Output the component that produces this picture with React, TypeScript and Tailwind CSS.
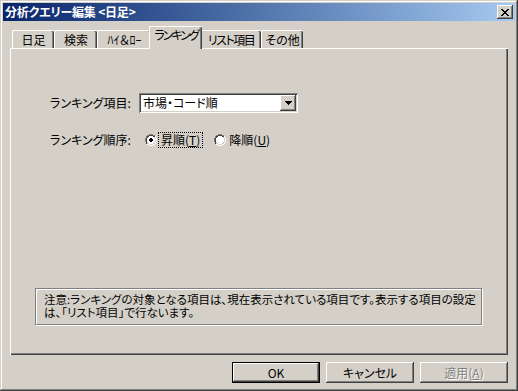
import type React from "react"

const raised =
  "shadow-[inset_-1px_-1px_#404040,inset_1px_1px_#ffffff,inset_-2px_-2px_#808080,inset_2px_2px_#d4d0c8]"
const sunken =
  "shadow-[inset_1px_1px_#808080,inset_-1px_-1px_#ffffff,inset_2px_2px_#404040,inset_-2px_-2px_#d4d0c8]"

const tabs = [
  { label: "日足", w: "w-[42px]", tr: "" },
  { label: "検索", w: "w-[43px]", tr: "" },
  { label: "ﾊｲ＆ﾛｰ", w: "w-[54px]", tr: "" },
  { label: "ランキング", w: "w-[48px]", tr: "tracking-[-2px]", active: true },
  { label: "リスト項目", w: "w-[61px]", tr: "tracking-[-1.5px]" },
  { label: "その他", w: "w-[42px]", tr: "" },
]

const Radio: React.FC<{ checked?: boolean }> = ({ checked }) => (
  <svg width="12" height="12" viewBox="0 0 12 12" className="shrink-0" shapeRendering="crispEdges">
    {/* outer ring */}
    <path d="M4 0h4v1H4zM2 1h2v1H2zM8 1h2v1H8zM1 2h1v2H1zM0 4h1v4H0z" fill="#808080" />
    <path d="M10 2h1v2h-1zM11 4h1v4h-1zM10 8h1v2h-1zM8 10h2v1H8zM4 11h4v1H4zM2 10h2v1H2z" fill="#ffffff" />
    {/* inner ring */}
    <path d="M4 1h4v1H4zM2 2h2v1H2zM8 2h2v1H8zM1 4h1v4H1zM2 3h1v1H2zM1 8h1v2H1z" fill="#404040" />
    <path d="M9 3h1v1H9zM10 4h1v4h-1zM9 8h1v1H9zM8 9h1v1H8zM4 10h4v1H4zM2 9h2v1H2z" fill="#d4d0c8" />
    {/* face */}
    <path d="M4 2h4v1h1v1h1v4H9v1H8v1H4V9H3V8H2V4h1V3h1z" fill="#ffffff" />
    {checked && <path d="M5 4h2v1h1v2H7v1H5V7H4V5h1z" fill="#000000" />}
  </svg>
)

export default function App() {
  return (
    <div
      className={`w-[518px] h-[391px] bg-[#d4d0c8] p-[3px] flex flex-col font-['Noto_Sans_CJK_JP',sans-serif] [font-feature-settings:"palt"] text-[12px] text-black shadow-[inset_-1px_-1px_#404040,inset_1px_1px_#d4d0c8,inset_-2px_-2px_#808080,inset_2px_2px_#ffffff]`}
    >
      {/* Title bar */}
      <div className="h-[18px] flex items-center justify-between pl-[2px] pr-[2px] bg-gradient-to-r from-[#0a246a] to-[#a6caf0]">
        <span className="text-white font-bold leading-none text-[12px] tracking-[-0.2px] whitespace-pre">分析クエリー編集 &lt;日足&gt;</span>
        <div className={`w-[16px] h-[14px] bg-[#d4d0c8] flex items-center justify-center ${raised}`}>
          <svg width="8" height="7" viewBox="0 0 8 7" shapeRendering="crispEdges">
            <path
              d="M0 0h2v1h1v1h2V1h1V0h2v1H7v1H6v1H5v1h1v1h1v1h1v1H6V6H5V5H3v1H2v1H0V6h1V5h1V4h1V3H2V2H1V1H0z"
              fill="#000"
            />
          </svg>
        </div>
      </div>

      {/* Tab control */}
      <div className="px-[7px] pt-[7px] flex flex-col">
        <div className="h-[20px] flex items-end pl-[2px] relative z-10">
          {tabs.map((t) =>
            t.active ? (
              <div
                key={t.label}
                className={`${t.w} h-[21px] -mx-[2px] mb-[-1px] box-content px-[2px] bg-[#d4d0c8] border-t border-l border-white rounded-tl-[2px] rounded-tr-[2px] shadow-[inset_-1px_0_#404040,inset_-2px_0_#808080] flex items-start justify-center pt-[1px] leading-[14px] whitespace-nowrap relative z-10`}
              >
                <span className={t.tr}>{t.label}</span>
              </div>
            ) : (
              <div
                key={t.label}
                className={`${t.w} h-[18px] bg-[#d4d0c8] border-t border-l border-white rounded-tl-[2px] rounded-tr-[2px] shadow-[inset_-1px_0_#404040,inset_-2px_0_#808080] flex items-center justify-center leading-[14px] whitespace-nowrap`}
              >
                <span className={t.tr}>{t.label}</span>
              </div>
            )
          )}
        </div>

        <div className="h-[307px] border-t border-l border-white shadow-[inset_-1px_-1px_#404040,inset_-2px_-2px_#808080] flex flex-col">
          {/* Form */}
          <div className="pl-[39px] pt-[44px] flex flex-col gap-[19px]">
            <div className="flex items-center h-[20px]">
              <span className="w-[89px] shrink-0">ランキング項目:</span>
              <div className={`w-[159px] h-[20px] bg-white flex items-center pl-[4px] pr-[2px] ${sunken}`}>
                <span className="flex-1 leading-none">市場・コード順</span>
                <div className={`w-[16px] h-[16px] bg-[#d4d0c8] flex items-center justify-center ${raised}`}>
                  <svg width="7" height="4" viewBox="0 0 7 4" shapeRendering="crispEdges">
                    <path d="M0 0h7v1H6v1H5v1H4v1H3V3H2V2H1V1H0z" fill="#000" />
                  </svg>
                </div>
              </div>
            </div>

            <div className="flex items-center h-[16px]">
              <span className="w-[89px] shrink-0">ランキング順序:</span>
              <div className="flex items-center pl-[6px]">
                <Radio checked />
                <span className="ml-[1px] px-[2px] h-[16px] flex items-center border border-dotted border-black leading-none">
                  昇順(<span className="underline">T</span>)
                </span>
                <span className="ml-[11px]">
                  <Radio />
                </span>
                <span className="ml-[3px] leading-none">
                  降順(<span className="underline">U</span>)
                </span>
              </div>
            </div>
          </div>

          {/* Note */}
          <div className="mt-auto mb-[30px] ml-[24px] w-[447px] h-[37px] border border-[#808080] shadow-[inset_1px_1px_#ffffff,1px_1px_#ffffff] pl-[8px] pt-[4px] text-[11.5px] leading-[13px] whitespace-nowrap">
            <div>注意:ランキングの対象となる項目は、現在表示されている項目です。表示する項目の設定</div>
            <div>は、「リスト項目」で行ないます。</div>
          </div>
        </div>
      </div>

      {/* Buttons */}
      <div className="flex justify-end gap-[6px] pr-[7px] mt-[7px]">
        <div className="w-[88px] h-[21px] border border-black">
          <div className={`w-full h-full flex items-center justify-center ${raised}`}>OK</div>
        </div>
        <div className={`w-[88px] h-[21px] flex items-center justify-center ${raised}`}>キャンセル</div>
        <div
          className={`w-[88px] h-[21px] flex items-center justify-center text-[#808080] [text-shadow:1px_1px_#ffffff] ${raised}`}
        >
          適用(<span className="underline">A</span>)
        </div>
      </div>
    </div>
  )
}
